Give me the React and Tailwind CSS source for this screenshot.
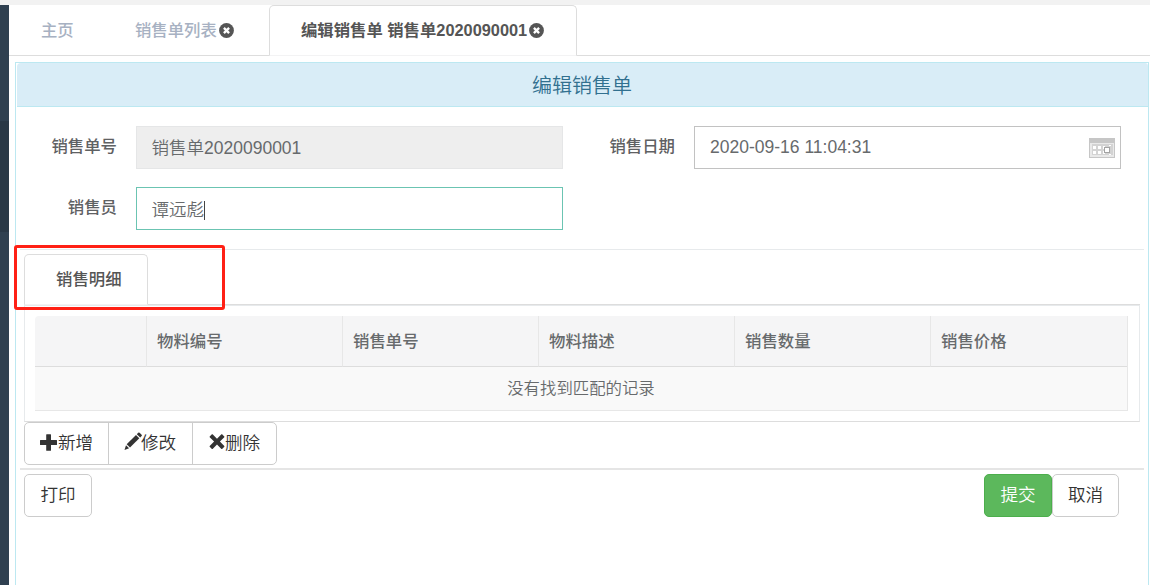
import React from "react";

const cx = (...parts) => parts.filter(Boolean).join(" ");

function CloseCircle() {
  return (
    <svg className="ml-0.5 size-[15px] shrink-0" viewBox="0 0 15 15">
      <circle cx="7.5" cy="7.5" r="7.4" fill="#555555" />
      <path d="M4.900 4.900l5.200 5.200M10.100 4.900l-5.200 5.200" stroke="#ffffff" strokeWidth="2.300" />
    </svg>
  );
}

function PlusIcon() {
  return (
    <svg className="-mt-[3px] mr-px size-[17px] shrink-0" viewBox="0 0 17 17" fill="#333333">
      <path d="M6.7 0.3h3.8q.5 0 .5.5V6h5.500q.5 0 .5.5v3.900q0 .5-.5.5H11v5.400q0 .5-.5.5H6.700q-.5 0-.5-.5v-5.400H.500q-.5 0-.5-.5V6.500q0-.5.5-.5h5.700V.800q0-.5.5-.5z" />
    </svg>
  );
}

function PencilIcon() {
  return (
    <svg className="-mt-[5px] -mr-px h-[19px] w-[18px] shrink-0" viewBox="0 0 18 19" fill="#333333">
      <path d="M14.200.8q.7-.6 1.400 0l2 2q.6.7 0 1.300l-1.400 1.400L12.800 2.200z" />
      <path d="M12 3l3.300 3.300L6 15.600 2.700 12.300z" />
      <path d="M2 13.200L5.100 16.300 0.500 18z" />
    </svg>
  );
}

function RemoveIcon() {
  return (
    <svg className="-mt-[4px] ml-px h-[17px] w-4 shrink-0" viewBox="0 0 16 17" fill="#333333">
      <path d="M3.600 1.300L8 5.700l4.400-4.400q.4-.3.700 0l2.200 2.200q.3.400 0 .7L10.900 8.600l4.400 4.400q.3.400 0 .7l-2.200 2.200q-.4.300-.7 0L8 11.500l-4.400 4.400q-.4.300-.7 0L.7 13.700q-.3-.4 0-.7l4.400-4.400L.7 4.200q-.3-.4 0-.7l2.200-2.200q.4-.3.700 0z" />
    </svg>
  );
}

function CalendarIcon() {
  return (
    <svg className="h-5 w-[26px] shrink-0" viewBox="0 0 26 20" shapeRendering="crispEdges">
      <path fill="#c6c6c6" d="M0 0h26v20H0z" />
      <path fill="#e9e9e9" d="M1 5h24v14H1z" />
      <path fill="#d3d3d3" d="M3 6h21v11H3z" />
      <path fill="#ffffff" d="M4 8h3v3H4zM9 8h3v3H9zM14 8h2v3h-2zM4 13h3v3H4zM9 13h3v3H9zM14 13h2v3h-2zM20 7h2v1h-2zM20 16h2v1h-2z" />
      <path fill="#a3a3a3" d="M15 9h6v6h-6z" />
      <path fill="#ffffff" d="M16 10h4v4h-4z" />
    </svg>
  );
}

function Field({ label, children }) {
  return (
    <div className="flex">
      <label className="w-[116px] shrink-0 pr-[19px] text-right text-[16.4px] leading-[41px] font-medium text-[#5f6163]">
        {label}
      </label>
      {children}
    </div>
  );
}

const columns = ["", "物料编号", "销售单号", "物料描述", "销售数量", "销售价格"];

function Button({ className, children }) {
  return (
    <button className={cx("flex h-[43px] items-center border text-[17.6px] leading-[39px] whitespace-nowrap", className)}>
      {children}
    </button>
  );
}

export default function App() {
  return (
    <div className="h-[585px] w-[1150px] overflow-hidden bg-white font-['Liberation_Sans','Noto_Sans_CJK_SC',sans-serif] font-[350]">
      <div className="h-[5px] bg-[#f2f2f2]" />
      <div className="flex h-[580px]">
        <aside className="w-[9px] shrink-0 bg-[#2f4050] pt-[116px]">
          <div className="h-[111px] bg-[#293846]" />
        </aside>

        <div className="flex min-w-0 grow flex-col">
          <nav className="flex h-[51px] shrink-0 text-[16.35px] leading-none font-medium text-[#a7b1c2]">
            <div className="flex w-[93px] items-center border-b border-[#dddddd] pl-[32px]">主页</div>
            <div className="flex w-[167px] items-center border-b border-[#dddddd] pl-[33px]">
              销售单列表
              <CloseCircle />
            </div>
            <div className="flex w-[308px] items-center rounded-t-[5px] border border-[#dddddd] border-b-[#f3f3f4] pl-[31px] font-bold whitespace-nowrap text-[#555555]">
              编辑销售单 销售单2020090001
              <CloseCircle />
            </div>
            <div className="grow border-b border-[#dddddd]" />
          </nav>

          <main className="mt-1.5 mr-px ml-1.5 flex grow flex-col border border-b-0 border-[#bce8f1]">
            <header className="ml-px h-11 shrink-0 rounded-tl-[4px] rounded-tr-[3px] border-b border-[#bce8f1] bg-[#d9edf7] pt-px pr-px text-center text-xl leading-[44px] text-[#31708f]">
              编辑销售单
            </header>

            <form className="mr-1 ml-1 grid h-[143px] shrink-0 grid-cols-[558px_1fr] content-start gap-y-[18px] border-b border-[#e7eaec] pt-[19px] text-[17.5px] text-[#676a6c]">
              <Field label="销售单号">
                <div className="h-[43px] w-[427px] border border-[#e5e6e7] bg-[#eeeeee] pl-[14.5px] leading-[42px]">
                  销售单2020090001
                </div>
              </Field>
              <Field label="销售日期">
                <div className="flex h-[43px] w-[427px] items-center border border-[#c2c2c2] pr-[5px] pl-[15px] leading-[41px]">
                  <span className="grow pb-0.5 text-[17.5px] leading-[38px]">2020-09-16 11:04:31</span>
                  <CalendarIcon />
                </div>
              </Field>
              <Field label="销售员">
                <div className="flex h-[43px] w-[427px] items-center border border-[#6bc4b2] pt-[3px] pl-[14.5px] leading-[38px]">
                  谭远彪
                  <span className="h-[19px] w-px bg-[#444444]" />
                </div>
              </Field>
            </form>

            <section className="relative mr-2 ml-2 shrink-0 pt-1">
              <div className="flex h-[51px] text-[16.4px] leading-[49px] font-medium text-[#555555]">
                <div className="w-[124px] rounded-t-[5px] border border-[#dddddd] border-b-[#f3f3f4] pl-[31px]">销售明细</div>
                <div className="grow border-b border-[#dddddd]" />
              </div>
              <div className="h-[117px] border border-t-[#e7eaec] border-r-[#e7eaec] border-b-[#dddddd] border-l-[#e7eaec] pt-2.5 pr-[11px] pl-2.5">
                <table className="w-full table-fixed border-separate border-spacing-0 border-r border-b border-[#e7e7e7] text-[16.4px] text-[#676a6c]">
                  <colgroup>
                    <col className="w-[112px]" />
                    <col className="w-[196px]" />
                    <col className="w-[196px]" />
                    <col className="w-[196px]" />
                    <col className="w-[196px]" />
                    <col />
                  </colgroup>
                  <thead>
                    <tr className="h-[51px]">
                      {columns.map((name, i) => (
                        <th
                          key={i}
                          className="border-r border-b border-[#e7e7e7] border-b-[#dddddd] bg-[#f5f5f6] p-0 pl-2.5 text-left leading-[48px] font-medium first:rounded-tl-[4px] last:border-r-0"
                        >
                          {name}
                        </th>
                      ))}
                    </tr>
                  </thead>
                  <tbody>
                    <tr className="h-[43px]">
                      <td colSpan={6} className="bg-[#f9f9f9] p-0 pb-px text-center leading-[42px]">
                        没有找到匹配的记录
                      </td>
                    </tr>
                  </tbody>
                </table>
              </div>
              <div className="absolute -top-[5px] -left-[10px] h-[65px] w-[211px] rounded-[3px] border-3 border-[#ff2015]" />
            </section>

            <div className="mr-1 ml-1 h-[48px] shrink-0 border-b-2 border-[#e5e5e5] pl-1 text-[#333333]">
              <div className="flex">
                <Button className="w-[85px] rounded-l-[5px] border-[#cccccc] pl-[15px]">
                  <PlusIcon />
                  新增
                </Button>
                <Button className="-ml-px w-[85px] border-[#cccccc] pl-[15px]">
                  <PencilIcon />
                  修改
                </Button>
                <Button className="-ml-px w-[85px] rounded-r-[5px] border-[#cccccc] pl-[15px]">
                  <RemoveIcon />
                  删除
                </Button>
              </div>
            </div>

            <footer className="mt-1 flex pr-[29px] pl-2 text-[#333333]">
              <Button className="w-[68px] justify-center rounded-[5px] border-[#cccccc]">打印</Button>
              <Button className="ml-auto w-[68px] justify-center rounded-[5px] border-[#4cae4c] bg-[#5cb85c] text-white">提交</Button>
              <Button className="w-[67px] justify-center rounded-[5px] border-[#cccccc]">取消</Button>
            </footer>
          </main>
        </div>
      </div>
    </div>
  );
}
